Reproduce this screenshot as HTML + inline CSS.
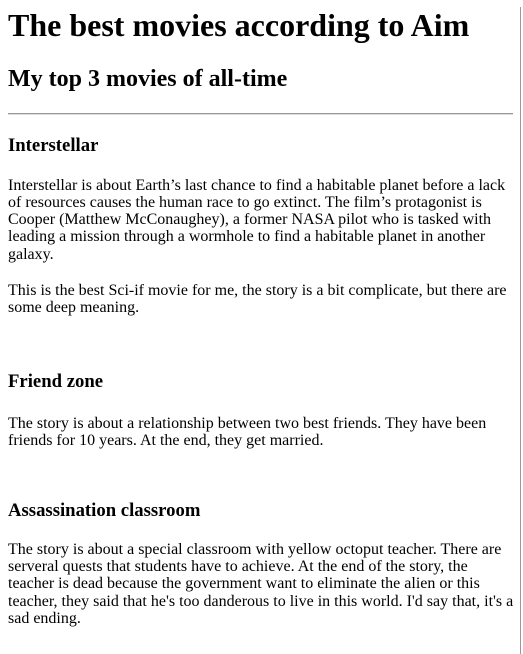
<!DOCTYPE html>
<html><head><meta charset="utf-8"><style>
html,body{margin:0;padding:0;background:#fff;}
body{width:505px;padding:0 8px;font-family:"Liberation Serif",serif;color:#000;position:relative;height:647px;overflow:hidden;}
h1{font-size:32px;line-height:37px;margin:7px 0 0;}
h2{font-size:24px;line-height:28px;margin:21px 0 0;}
hr{margin:20px 0 0;border:0;border-top:1px solid #999;border-bottom:1px solid #ddd;height:0;}
h3{font-size:18.72px;line-height:21.5px;margin:0;}
p{font-size:16px;line-height:17.25px;margin:0;}
.sb{position:absolute;left:520px;top:0;width:1px;height:647px;background:#999;}
</style></head><body>
<h1>The best movies according to Aim</h1>
<h2>My top 3 movies of all-time</h2>
<hr>
<h3 style="margin-top:20px">Interstellar</h3>
<p style="margin-top:20px">Interstellar is about Earth’s last chance to find a habitable planet before a lack of resources causes the human race to go extinct. The film’s protagonist is Cooper (Matthew McConaughey), a former NASA pilot who is tasked with leading a mission through a wormhole to find a habitable planet in another galaxy.</p>
<p style="margin-top:19px">This is the best Sci-if movie for me, the story is a bit complicate, but there are some deep meaning.</p>
<h3 style="margin-top:55px">Friend zone</h3>
<p style="margin-top:22px">The story is about a relationship between two best friends. They have been friends for 10 years. At the end, they get married.</p>
<h3 style="margin-top:51px">Assassination classroom</h3>
<p style="margin-top:19px;margin-right:-20px;white-space:nowrap">The story is about a special classroom with yellow octoput teacher. There are<br>serveral quests that students have to achieve. At the end of the story, the<br>teacher is dead because the government want to eliminate the alien or this<br>teacher, they said that he's too danderous to live in this world. I'd say that, it's a<br>sad ending.</p>
<div class="sb"></div>
</body></html>
